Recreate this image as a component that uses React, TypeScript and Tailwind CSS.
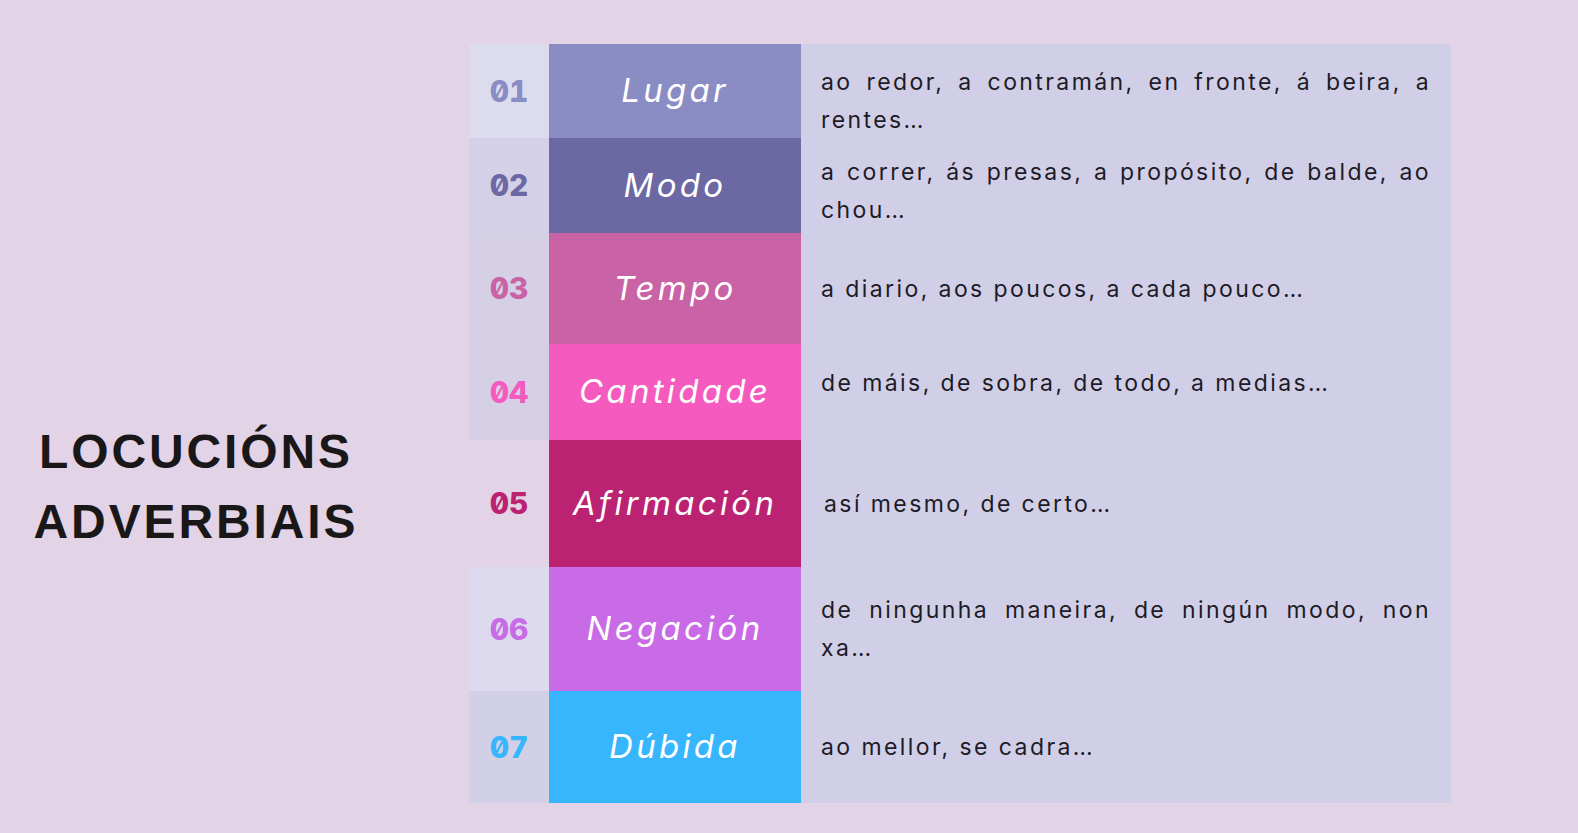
const rows = [
  { n: "01", label: "Lugar", text: "ao redor, a contramán, en fronte, á beira, a rentes…", h: "h-[94px]", num: "text-[#8a8cc4] bg-[#dddcef]", box: "bg-[#8a8cc4]", pad: "pt-[20px]" },
  { n: "02", label: "Modo", text: "a correr, ás presas, a propósito, de balde, ao chou…", h: "h-[95px]", num: "text-[#6b68a3] bg-[#d3d0e8]", box: "bg-[#6b68a3]", pad: "pt-[10px]" },
  { n: "03", label: "Tempo", text: "a diario, aos poucos, a cada pouco…", h: "h-[111px]", num: "text-[#c963a6] bg-[#d6d0e7]", box: "bg-[#c963a6]", pad: "" },
  { n: "04", label: "Cantidade", text: "de máis, de sobra, de todo, a medias…", h: "h-[96px]", num: "text-[#f55bbf] bg-[#d6d0e7]", box: "bg-[#f55bbf]", pad: "pb-[18px]" },
  { n: "05", label: "Afirmación", text: "así mesmo, de certo…", h: "h-[127px]", num: "text-[#bb2372] bg-transparent", box: "bg-[#bb2372]", pad: "pl-[23px]" },
  { n: "06", label: "Negación", text: "de ningunha maneira, de ningún modo, non xa…", h: "h-[124px]", num: "text-[#c96ae6] bg-[#dddaf0]", box: "bg-[#c96ae6]", pad: "" },
  { n: "07", label: "Dúbida", text: "ao mellor, se cadra…", h: "h-[112px]", num: "text-[#37b6fe] bg-[#d2d0e7]", box: "bg-[#37b6fe]", pad: "" },
];

export default function App() {
  return (
    <div className="w-[1578px] h-[833px] bg-[#e3d3e6] flex overflow-hidden">
      <div className="w-[392px] flex flex-col justify-center pt-[140px]">
        <h1
          className="text-center font-bold text-[48px] leading-[70px] tracking-[0.06em] text-[#1a1719]"
          style={{ fontFamily: '"Liberation Sans", Arial, sans-serif' }}
        >
          LOCUCIÓNS
          <br />
          ADVERBIAIS
        </h1>
      </div>
      <div className="ml-[77px] pt-[44px] flex flex-col w-[982px]">
        {rows.map((r) => (
          <div key={r.n} className={`flex ${r.h}`}>
            <div
              className={`w-[80px] flex items-center justify-center font-extrabold text-[30px] tabular-nums slashed-zero ${r.num}`}
              style={{ fontFamily: "Inter, sans-serif" }}
            >
              {r.n}
            </div>
            <div
              className={`w-[252px] flex items-center justify-center text-white italic text-[33px] tracking-[0.1em] ${r.box}`}
              style={{ fontFamily: "Inter, sans-serif" }}
            >
              {r.label}
            </div>
            <div
              className={`w-[650px] bg-[#d1cfe7] flex items-center pl-[20px] pr-[20px] ${r.pad}`}
              style={{ fontFamily: "Inter, sans-serif" }}
            >
              <p className="text-[23px] leading-[38px] tracking-[0.105em] text-justify text-[#1d1b26] w-full">
                {r.text}
              </p>
            </div>
          </div>
        ))}
      </div>
    </div>
  );
}
